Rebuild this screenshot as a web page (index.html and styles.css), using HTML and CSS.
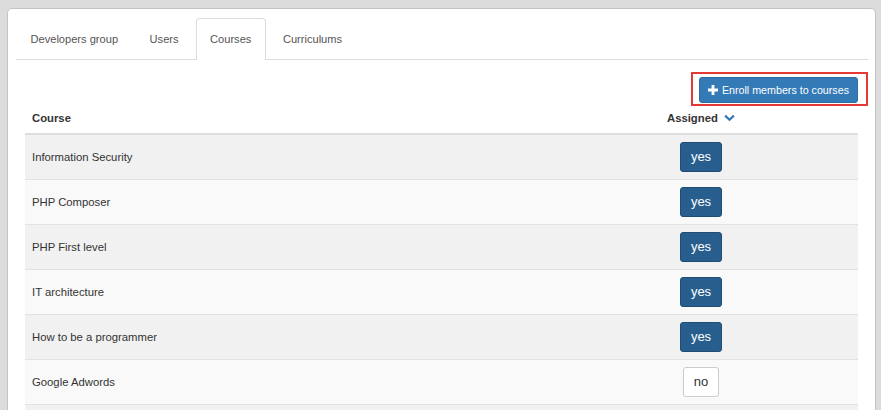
FILE: index.html
```html
<!DOCTYPE html>
<html>
<head>
<meta charset="utf-8">
<link rel="stylesheet" href="styles.css">
</head>
<body>
<div class="panel">
  <ul class="tabs">
    <li class="tab"><a>Developers group</a></li>
    <li class="tab"><a>Users</a></li>
    <li class="tab active"><a>Courses</a></li>
    <li class="tab"><a>Curriculums</a></li>
  </ul>
  <div class="tab-content">
    <div class="toolbar">
      <div class="btn-wrap">
        <button class="btn-enroll"><svg class="plus" viewBox="0 0 10 10" width="10" height="10"><path d="M3.6 0h2.8v3.6H10v2.8H6.4V10H3.6V6.4H0V3.6h3.6z" fill="#fff"/></svg>Enroll members to courses</button>
        <span class="highlight"></span>
      </div>
    </div>
    <table class="courses">
      <thead>
        <tr><th class="c-name">Course</th><th class="c-assigned">Assigned <svg class="chev" viewBox="0 0 12 8" width="11" height="8"><path d="M1.2 1.4L6 6l4.8-4.6" fill="none" stroke="#337ab7" stroke-width="2.4"/></svg></th></tr>
      </thead>
      <tbody>
        <tr><td>Information Security</td><td class="c-assigned"><span class="pill yes">yes</span></td></tr>
        <tr><td>PHP Composer</td><td class="c-assigned"><span class="pill yes">yes</span></td></tr>
        <tr><td>PHP First level</td><td class="c-assigned"><span class="pill yes">yes</span></td></tr>
        <tr><td>IT architecture</td><td class="c-assigned"><span class="pill yes">yes</span></td></tr>
        <tr><td>How to be a programmer</td><td class="c-assigned"><span class="pill yes">yes</span></td></tr>
        <tr><td>Google Adwords</td><td class="c-assigned"><span class="pill no">no</span></td></tr>
        <tr><td></td><td class="c-assigned"></td></tr>
      </tbody>
    </table>
  </div>
</div>
</body>
</html>
```
FILE: styles.css
```css
html, body {
  margin: 0;
  padding: 0;
}
body {
  background: #dcdcdc;
  font-family: "Liberation Sans", Arial, sans-serif;
  font-size: 11.3px;
  color: #333;
  height: 410px;
  overflow: hidden;
}
.panel {
  margin: 8px 5px 0 7px;
  background: #fff;
  border: 1px solid #c4c4c4;
  border-radius: 5px;
  padding: 9px 7px 0 8px;
  height: 600px;
}
.tabs {
  list-style: none;
  margin: 0;
  padding: 0;
  display: flex;
  border-bottom: 1px solid #ddd;
  height: 41px;
  font-size: 11.1px;
}
.tab {
  margin-right: 2px;
  margin-bottom: -1px;
}
.tab a {
  display: block;
  padding: 0 14px 0 13.5px;
  line-height: 40px;
  border: 1px solid transparent;
  border-bottom: none;
  border-radius: 4px 4px 0 0;
  color: #555;
  height: 41px;
  box-sizing: border-box;
}
.tab.active a {
  border-color: #ddd;
  background: #fff;
  height: 42px;
}
.tab-content {
  padding: 0 10px 0 9px;
}
.toolbar {
  display: flex;
  justify-content: flex-end;
  padding-top: 17px;
}
.btn-wrap {
  position: relative;
}
.btn-enroll {
  display: flex;
  align-items: center;
  gap: 4px;
  height: 26px;
  padding: 0 8px;
  background: #337ab7;
  border: 1px solid #2e6da4;
  border-radius: 3px;
  color: #fff;
  font-family: "Liberation Sans", Arial, sans-serif;
  font-size: 10.7px;
}
.plus {
  display: block;
}
.highlight {
  position: absolute;
  left: -8px;
  right: -10px;
  top: -5px;
  bottom: -3px;
  border: 2px solid #e53935;
}
.courses {
  width: 100%;
  border-collapse: collapse;
}
.courses th {
  text-align: left;
  font-weight: bold;
  height: 31px;
  padding: 0 7px;
  border-bottom: 2px solid #ddd;
  box-sizing: border-box;
  vertical-align: middle;
}
.courses th.c-assigned {
  text-align: center;
}
.chev {
  vertical-align: middle;
  margin-left: 3px;
  position: relative;
  top: -1px;
}
.c-assigned {
  width: 314px;
  text-align: center;
}
.courses td {
  height: 45px;
  padding: 0 7px;
  border-top: 1px solid #e2e2e2;
  vertical-align: middle;
  box-sizing: border-box;
}
.courses tbody tr:nth-child(odd) {
  background: #f1f1f1;
}
.courses tbody tr:nth-child(even) {
  background: #f9f9f9;
}
.courses td.c-assigned {
  text-align: center;
}
.pill {
  display: inline-block;
  height: 30px;
  line-height: 28px;
  box-sizing: border-box;
  border-radius: 3px;
  font-size: 13px;
  vertical-align: middle;
}
.pill.yes {
  width: 42px;
  background: #285e8e;
  border: 1px solid #204d74;
  color: #fff;
}
.pill.no {
  width: 36px;
  background: #fff;
  border: 1px solid #ccc;
  color: #333;
}
```
